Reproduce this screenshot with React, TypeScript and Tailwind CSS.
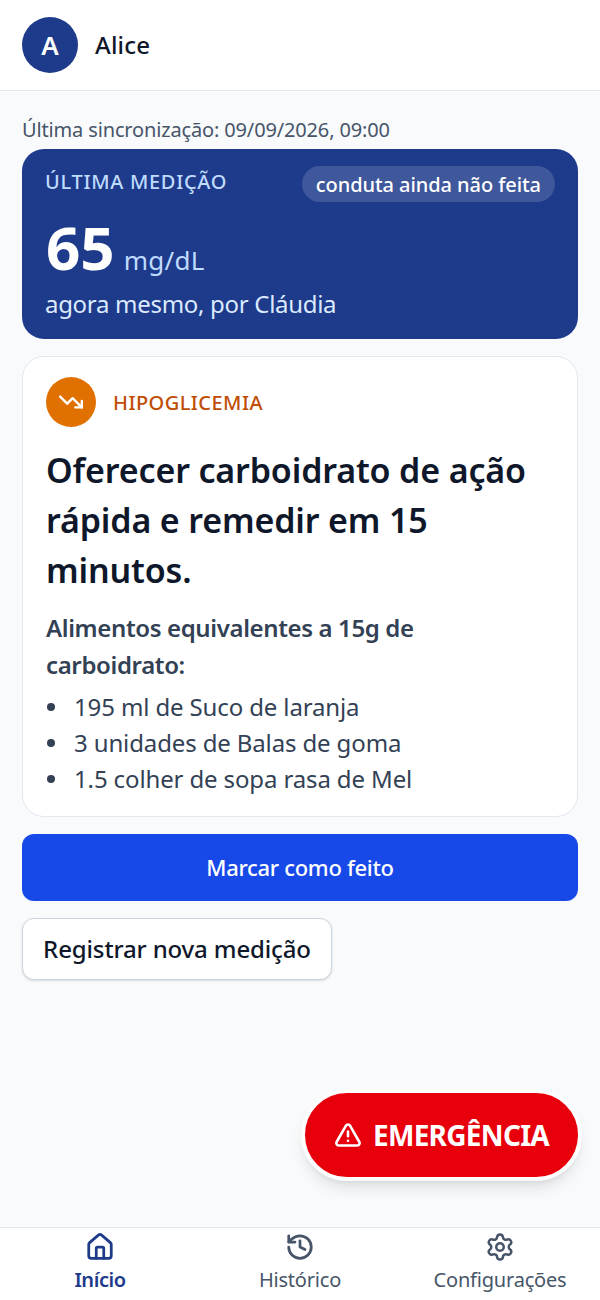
import { AlertTriangle, History, Home, Settings, TrendingDown } from "lucide-react";

const font = { fontFamily: '"Noto Sans", "Open Sans", sans-serif' };

function NavItem({ icon, label, active }: { icon: React.ReactNode; label: string; active?: boolean }) {
  return (
    <div className={`flex flex-1 flex-col items-center pt-[4px] ${active ? "text-[#1e3a8a]" : "text-[#475569]"}`}>
      {icon}
      <span className={`mt-[4px] text-[20px] leading-[28px] ${active ? "font-semibold tracking-[-0.45px]" : "tracking-[-0.2px]"}`}>{label}</span>
    </div>
  );
}

function Food({ children }: { children: string }) {
  return (
    <li className="flex items-center h-[36px]">
      <span className="ml-[1px] mr-[19px] h-[8px] w-[8px] shrink-0 rounded-full bg-[#334155]" />
      {children}
    </li>
  );
}

export default function App() {
  return (
    <div style={font} className="relative flex h-[1300px] w-[600px] flex-col overflow-hidden bg-[#f8fafc]">
      <header className="flex h-[91px] items-center gap-[17px] border-b border-[#e2e8f0] bg-white px-[22px]">
        <div className="flex h-[56px] w-[56px] items-center justify-center rounded-full bg-[#1e3a8a] text-[26px] font-semibold text-white">A</div>
        <span className="text-[24px] font-medium tracking-[0.2px] text-[#0f172a]">Alice</span>
      </header>

      <main className="flex flex-1 flex-col items-start px-[22px] pt-[25px]">
        <p className="text-[20px] leading-[28px] tracking-[-0.15px] text-[#475569]">Última sincronização: 09/09/2026, 09:00</p>

        <section className="mt-[5px] h-[190px] w-full rounded-[22px] bg-[#1e3a8a] px-[23px] pt-[17px]">
          <div className="flex items-start justify-between">
            <span className="text-[20px] font-medium leading-[32px] tracking-[0.7px] text-[#bfdbfe]">ÚLTIMA MEDIÇÃO</span>
            <span className="h-[36px] rounded-full bg-white/15 px-[14px] py-[1px] text-[20px] font-medium leading-[36px] tracking-[-0.07px] text-white">conduta ainda não feita</span>
          </div>
          <div className="ml-[1px] mt-[9px] flex items-baseline gap-[9px]">
            <span className="text-[60px] font-bold leading-[72px] text-white">65</span>
            <span className="text-[26px] leading-[32px] tracking-[0.3px] text-[#bfdbfe]">mg/dL</span>
          </div>
          <p className="mt-[5px] text-[24px] leading-[32px] tracking-[-0.3px] text-[#dbeafe]">agora mesmo, por Cláudia</p>
        </section>

        <section className="mt-[17px] w-full rounded-[22px] border border-[#e2e8f0] bg-white px-[23px] pb-[19px] pt-[20px]">
          <div className="flex items-center gap-[17px]">
            <div className="flex h-[50px] w-[50px] items-center justify-center rounded-full bg-[#e07000] text-white">
              <TrendingDown size={26} strokeWidth={2.2} />
            </div>
            <span className="pt-[2px] text-[20px] font-medium tracking-[0.45px] text-[#bf4d06]">HIPOGLICEMIA</span>
          </div>
          <h1 className="mt-[18px] text-[34px] font-semibold leading-[50px] tracking-[-0.15px] text-[#0f172a]">
            Oferecer carboidrato de ação rápida e remedir em 15 minutos.
          </h1>
          <p className="mt-[14px] max-w-[480px] text-[24px] font-semibold leading-[37px] tracking-[-0.37px] text-[#334155]">
            Alimentos equivalentes a 15g de carboidrato:
          </p>
          <ul className="mt-[6px] text-[24px] tracking-[-0.13px] text-[#334155]">
            <Food>195 ml de Suco de laranja</Food>
            <Food>3 unidades de Balas de goma</Food>
            <Food>1.5 colher de sopa rasa de Mel</Food>
          </ul>
        </section>

        <button className="mt-[17px] h-[67px] w-full rounded-[12px] bg-[#1748e8] text-[22px] font-medium tracking-[-0.3px] text-white">Marcar como feito</button>
        <button className="mt-[17px] h-[62px] w-[310px] rounded-[12px] border border-[#cbd5e1] bg-white text-[24px] font-medium tracking-[-0.14px] text-[#0f172a] shadow-sm">Registrar nova medição</button>
      </main>

      <button className="absolute bottom-[119px] right-[18px] flex h-[92px] w-[281px] items-center justify-center gap-[11px] rounded-full border-[4px] border-[#fdfdfd] bg-[#e7000b] text-[28px] font-bold tracking-[-0.7px] text-white shadow-lg">
        <AlertTriangle size={28} strokeWidth={2.2} />
        EMERGÊNCIA
      </button>

      <nav className="flex h-[73px] border-t border-[#e2e8f0] bg-white">
        <NavItem active icon={<Home size={30} strokeWidth={2.2} />} label="Início" />
        <NavItem icon={<History size={30} strokeWidth={2.2} />} label="Histórico" />
        <NavItem icon={<Settings size={30} strokeWidth={2} />} label="Configurações" />
      </nav>
    </div>
  );
}
